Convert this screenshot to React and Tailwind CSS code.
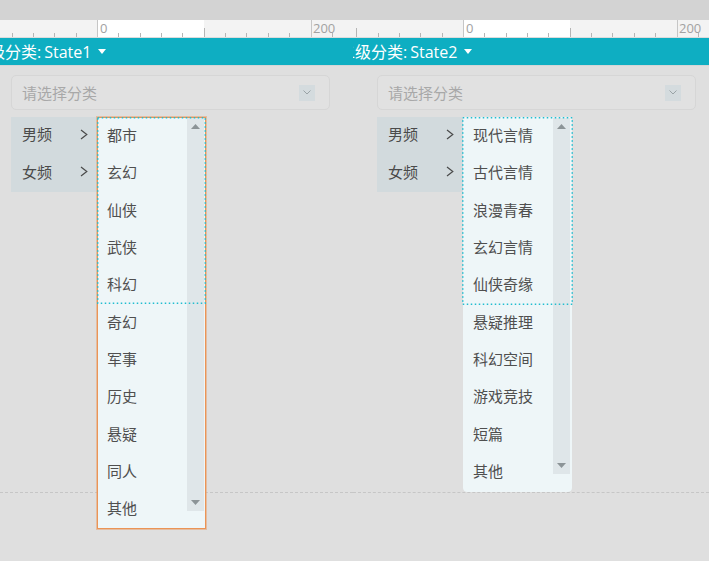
import React from "react";

const ITEMS_L = ["都市", "玄幻", "仙侠", "武侠", "科幻", "奇幻", "军事", "历史", "悬疑", "同人", "其他"];
const ITEMS_R = ["现代言情", "古代言情", "浪漫青春", "玄幻言情", "仙侠奇缘", "悬疑推理", "科幻空间", "游戏竞技", "短篇", "其他"];

function Ruler() {
  const ticks = [];
  for (let k = -7; k <= 18; k++) {
    const x = Math.round(130 + k * 21.35) + 0.5;
    if (k % 10 === 0) {
      ticks.push(<line key={k} x1={x} x2={x} y1="0" y2="17" stroke="#c6c6c6" strokeWidth="1" />);
    } else if (k % 5 === 0) {
      ticks.push(<line key={k} x1={x} x2={x} y1="8" y2="17" stroke="#b5b5b5" strokeWidth="1" />);
    } else {
      ticks.push(<line key={k} x1={x} x2={x} y1="13" y2="17" stroke="#b5b5b5" strokeWidth="1" />);
    }
  }
  return (
    <div className="relative h-[18px] w-[560px]">
      <svg width="560" height="18" className="block">
        <rect width="560" height="18" fill="#f3f3f3" />
        <rect x="130" y="0" width="107" height="17" fill="#ffffff" />
        <line x1="0" x2="560" y1="17.5" y2="17.5" stroke="#dcdcdc" />
        {ticks}
      </svg>
      <span className="absolute left-[133px] top-[1px] text-[13px] leading-[15px] text-[#a2a2a2]">0</span>
      <span className="absolute left-[346px] top-[1px] text-[13px] leading-[15px] text-[#a2a2a2]">200</span>
    </div>
  );
}

function Chevron() {
  return (
    <svg width="8" height="11" viewBox="0 0 8 11" className="block">
      <path d="M1 1 L6.8 5.5 L1 10" fill="none" stroke="#4a4a4a" strokeWidth="1.2" />
    </svg>
  );
}

function Panel({ wrapClass, canvasClass, state, items, listClass, selClass, selW, selH, scrollClass }) {
  return (
    <div className={"relative h-[541px] overflow-hidden shrink-0 " + wrapClass}>
      <div className="absolute left-0 right-0 top-[472px] border-t border-dashed border-[#c6c6c6]" />
      <div className={"relative w-[560px] " + canvasClass}>
        <Ruler />
        <div className="h-[27px] bg-[#0eaec2] flex items-center pl-[6px] text-white border-b border-[#d4d6d7] box-content">
          <span className="text-[16px] leading-[20px]">二级分类:</span>
          <span className="text-[16px] leading-[20px] ml-[3px]">{state}</span>
          <svg width="8" height="5" viewBox="0 0 8 5" className="ml-[7px] block">
            <path d="M0 0 L8 0 L4 5 Z" fill="#ffffff" />
          </svg>
        </div>
        <div className="pl-[44px] pt-[9px]">
          <div className="w-[319px] h-[35px] rounded-[5px] border border-[#d6d6d6] bg-[#e1e1e1] flex items-center justify-between pl-[10px] pr-[14px]">
            <span className="text-[15px] leading-[20px] text-[#a8a8a8]">请选择分类</span>
            <div className="w-[16px] h-[16px] bg-[#d4dbde] flex items-center justify-center">
              <svg width="8" height="5" viewBox="0 0 8 5" className="block">
                <path d="M0.5 0.5 L4 4 L7.5 0.5" fill="none" stroke="#9aa3a6" strokeWidth="1" />
              </svg>
            </div>
          </div>
          <div className="mt-[7px] flex items-start">
            <div className="w-[86px] bg-[#d2dadd]">
              {["男频", "女频"].map((t) => (
                <div key={t} className="h-[37.4px] flex items-center justify-between pl-[11px] pr-[9px] pb-[3px] text-[15px] text-[#4a4a4a]">
                  <span className="leading-[20px]">{t}</span>
                  <Chevron />
                </div>
              ))}
            </div>
            <div className={"relative z-10 w-[109px] bg-[#eef6f8] flex border-solid border-[1px] " + listClass}>
              <div className="flex-1 flex flex-col">
                {items.map((t, i) => (
                  <div key={i} className="h-[37.3px] flex items-center pl-[9px] pb-[3px] text-[15px] text-[#4f4f4f]">
                    <span className="leading-[20px] whitespace-nowrap">{t}</span>
                  </div>
                ))}
              </div>
              <div className={"w-[17px] mr-[1px] bg-[#dfe6e9] flex flex-col items-center justify-between py-[6px] " + scrollClass}>
                <svg width="9" height="5" viewBox="0 0 9 5" className="block">
                  <path d="M0 5 L4.5 0 L9 5 Z" fill="#8c9497" />
                </svg>
                <svg width="9" height="5" viewBox="0 0 9 5" className="block">
                  <path d="M0 0 L9 0 L4.5 5 Z" fill="#8c9497" />
                </svg>
              </div>
              <svg width={selW} height={selH} className={"absolute block pointer-events-none " + selClass}>
                <rect x="0.75" y="0.75" width={selW - 1.5} height={selH - 1.5} fill="none" stroke="#22bdcf" strokeWidth="1.5" strokeDasharray="1.5 2.5" />
              </svg>
            </div>
          </div>
        </div>
      </div>
    </div>
  );
}

export default function App() {
  return (
    <div className="w-[709px] h-[561px] overflow-hidden bg-[#dfdfdf] font-['Open_Sans','Noto_Sans_CJK_SC',sans-serif]">
      <div className="h-[20px] bg-[#d3d3d3]" />
      <div className="flex">
        <Panel
          wrapClass="w-[353px]"
          canvasClass="ml-[-33px]"
          state="State1"
          items={ITEMS_L}
          listClass="border-[#eb9456] shadow-[0_0_0_1px_rgba(235,148,86,0.45)]"
          selClass="left-[-1px] top-[-1px]"
          selW={109}
          selH={187}
          scrollClass="mb-[17px]"
        />
        <Panel
          wrapClass="w-[356px]"
          canvasClass="ml-[-20px]"
          state="State2"
          items={ITEMS_R}
          listClass="border-[#eef6f8] rounded-b-[4px]"
          selClass="left-[-2px] top-[-1px]"
          selW={111}
          selH={188}
          scrollClass="mb-[17px]"
        />
      </div>
    </div>
  );
}
